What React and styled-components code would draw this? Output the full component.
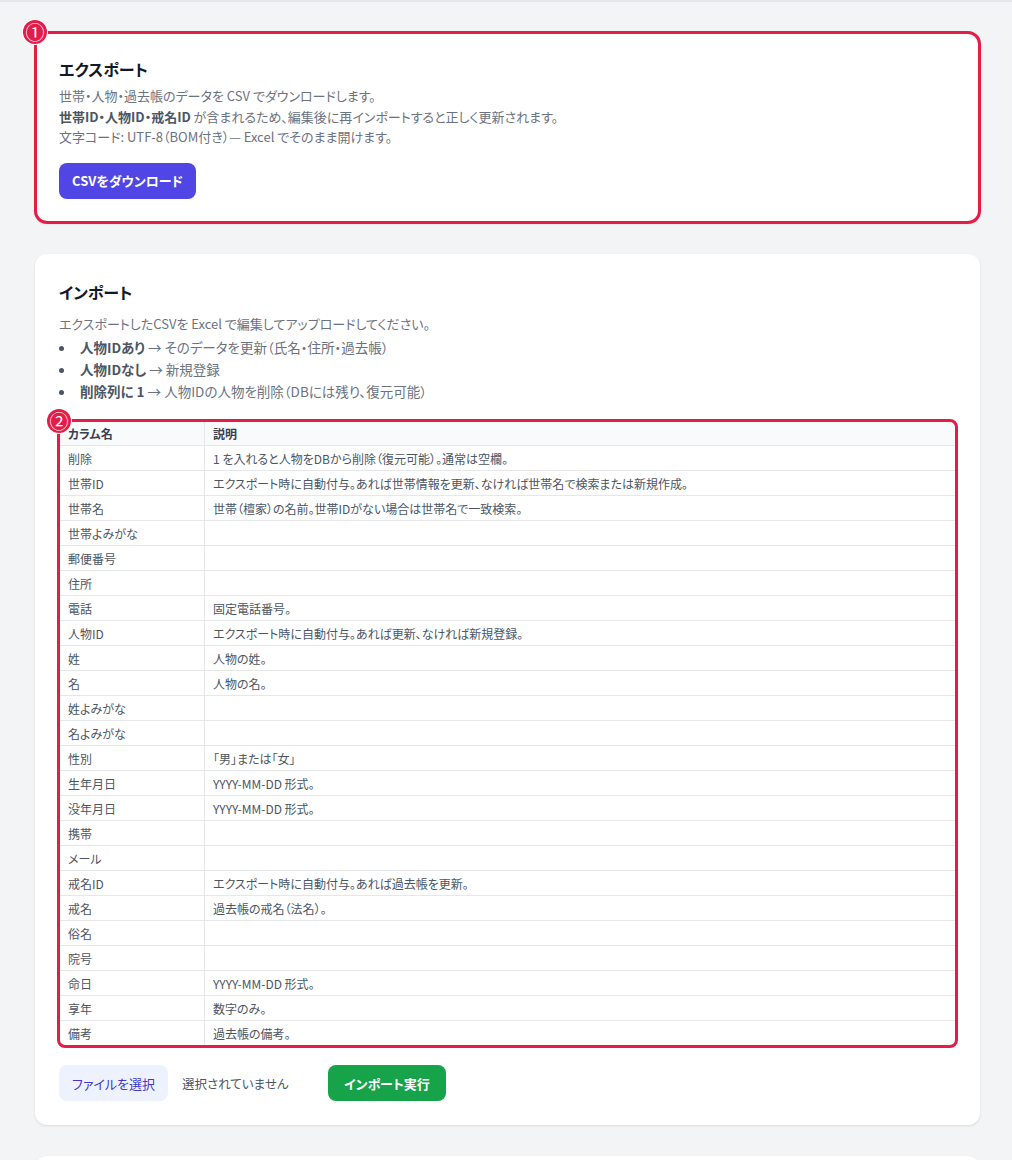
import React from "react";
import styled, { createGlobalStyle } from "styled-components";

const GlobalStyle = createGlobalStyle`
  html, body {
    margin: 0;
    padding: 0;
    background: #f3f4f6;
  }
  body {
    font-family: "Noto Sans CJK JP", "Noto Sans", "Liberation Sans", sans-serif;
    font-feature-settings: "palt";
    color: #4b5563;
  }
`;

const columns = [
    ["削除", "1 を入れると人物をDBから削除（復元可能）。通常は空欄。"],
    ["世帯ID", "エクスポート時に自動付与。あれば世帯情報を更新、なければ世帯名で検索または新規作成。"],
    ["世帯名", "世帯（檀家）の名前。世帯IDがない場合は世帯名で一致検索。"],
    ["世帯よみがな", ""],
    ["郵便番号", ""],
    ["住所", ""],
    ["電話", "固定電話番号。"],
    ["人物ID", "エクスポート時に自動付与。あれば更新、なければ新規登録。"],
    ["姓", "人物の姓。"],
    ["名", "人物の名。"],
    ["姓よみがな", ""],
    ["名よみがな", ""],
    ["性別", "「男」または「女」"],
    ["生年月日", "YYYY-MM-DD 形式。"],
    ["没年月日", "YYYY-MM-DD 形式。"],
    ["携帯", ""],
    ["メール", ""],
    ["戒名ID", "エクスポート時に自動付与。あれば過去帳を更新。"],
    ["戒名", "過去帳の戒名（法名）。"],
    ["俗名", ""],
    ["院号", ""],
    ["命日", "YYYY-MM-DD 形式。"],
    ["享年", "数字のみ。"],
    ["備考", "過去帳の備考。"],
];

export default function App() {
    return <>
        <GlobalStyle />
        <Page>
            <Highlight>
                <Card>
                    <Title gap={5}>エクスポート</Title>
                    <Text>世帯・人物・過去帳のデータを CSV でダウンロードします。</Text>
                    <Text><b>世帯ID・人物ID・戒名ID</b> が含まれるため、編集後に再インポートすると正しく更新されます。</Text>
                    <Text>文字コード: UTF-8（BOM付き）— Excel でそのまま開けます。</Text>
                    <Button color="#4f46e5" pad={13} style={{ marginTop: 15 }}>CSVをダウンロード</Button>
                </Card>
                <Frame />
                <Badge>①</Badge>
            </Highlight>

            <Card>
                <Title top={2} gap={10}>インポート</Title>
                <Text>エクスポートしたCSVを Excel で編集してアップロードしてください。</Text>
                <Bullets>
                    <li><b>人物IDあり</b> → そのデータを更新（氏名・住所・過去帳）</li>
                    <li><b>人物IDなし</b> → 新規登録</li>
                    <li><b>削除列に 1</b> → 人物IDの人物を削除（DBには残り、復元可能）</li>
                </Bullets>

                <Highlight>
                    <Table>
                        <colgroup>
                            <col width="144" />
                            <col />
                        </colgroup>
                        <thead>
                            <tr>
                                <Th>カラム名</Th>
                                <Th>説明</Th>
                            </tr>
                        </thead>
                        <tbody>
                            {columns.map(([name, desc]) => (
                                <tr key={name}>
                                    <Td>{name}</Td>
                                    <Td>{desc}</Td>
                                </tr>
                            ))}
                        </tbody>
                    </Table>
                    <Frame inset={-2} radius={8} />
                    <Badge>②</Badge>
                </Highlight>

                <UploadRow>
                    <FileButton>ファイルを選択</FileButton>
                    <FileName>選択されていません</FileName>
                    <Button color="#16a34a" pad={16}>インポート実行</Button>
                </UploadRow>
            </Card>

            <Card style={{ minHeight: 120 }} />
        </Page>
    </>
}

const Page = styled.div`
    border-top: 2px solid #e5e7eb;
    padding: 30px 32px 40px 35px;
    display: flex;
    flex-direction: column;
    gap: 31px;
`

const Card = styled.section`
    background: #fff;
    border-radius: 12px;
    box-shadow: 0 1px 3px rgba(0, 0, 0, 0.08), 0 1px 2px rgba(0, 0, 0, 0.04);
    padding: 24px;
`

const Highlight = styled.div`
    position: relative;
`

const Frame = styled.div`
    position: absolute;
    inset: ${p => p.inset ?? -1}px;
    border: 3px solid #e11d48;
    border-radius: ${p => p.radius ?? 13}px;
    pointer-events: none;
`

const Badge = styled.div`
    position: absolute;
    left: -12px;
    top: -12px;
    width: 24px;
    height: 24px;
    border-radius: 50%;
    background: #e11d48;
    box-shadow: 0 0 0 1px #fff;
    color: #fff;
    font-size: 19px;
    line-height: 24px;
    text-align: center;
`

const Title = styled.h2`
    margin: ${p => p.top ?? 1}px 0 ${p => p.gap ?? 3}px;
    font-size: 16px;
    line-height: 24px;
    font-weight: 700;
    color: #111827;
`

const Text = styled.p`
    margin: 0;
    font-size: 13px;
    line-height: 20.5px;
    color: #6b7280;

    b {
        color: #4b5563;
        font-weight: 700;
    }
`

const Bullets = styled.ul`
    margin: 2px 0 19px;
    padding-left: 17px;
    font-size: 13.5px;
    line-height: 22px;
    color: #6b7280;

    li {
        padding-left: 4px;
    }

    li::marker {
        color: #4b5563;
    }

    b {
        color: #4b5563;
        font-weight: 700;
    }
`

const Table = styled.table`
    width: 100%;
    table-layout: fixed;
    border-collapse: separate;
    border-spacing: 0;
    border: 1px solid #e5e7eb;
    border-radius: 6px;
    overflow: hidden;
    font-size: 12px;
`

const Th = styled.th`
    height: 23px;
    padding: 0 8px;
    text-align: left;
    font-weight: 700;
    color: #374151;
    background: #f9fafb;
    border-bottom: 1px solid #e5e7eb;

    & + & {
        border-left: 1px solid #e5e7eb;
    }
`

const Td = styled.td`
    height: 24px;
    padding: 0 8px;
    color: #4b5563;
    border-bottom: 1px solid #e5e7eb;
    white-space: nowrap;

    & + & {
        border-left: 1px solid #e5e7eb;
    }

    tr:last-child & {
        border-bottom: none;
    }
`

const UploadRow = styled.div`
    display: flex;
    align-items: center;
    margin-top: 19px;
`

const Button = styled.button`
    height: 36px;
    padding: 0 ${p => p.pad ?? 16}px;
    border: none;
    border-radius: 8px;
    background: ${p => p.color};
    color: #fff;
    font-family: inherit;
    font-feature-settings: "palt";
    font-size: 13px;
    font-weight: 700;
    cursor: pointer;
`

const FileButton = styled.button`
    height: 36px;
    padding: 0 13px;
    border: none;
    border-radius: 8px;
    background: #eef2ff;
    color: #4338ca;
    font-family: inherit;
    font-feature-settings: "palt";
    font-size: 13px;
    cursor: pointer;
`

const FileName = styled.span`
    margin-left: 14px;
    width: 146px;
    font-size: 12.5px;
    color: #4b5563;
`
